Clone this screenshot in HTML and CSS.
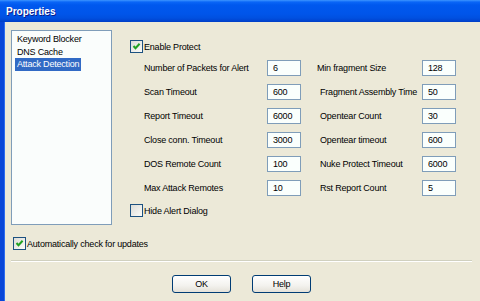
FILE: index.html
```html
<!DOCTYPE html>
<html lang="en">
<head>
    <meta charset="UTF-8">
    <meta name="viewport" content="width=device-width, initial-scale=1.0">
    <title>Properties</title>
    <link rel="stylesheet" href="styles.css">
</head>
<body>
    <div class="window">
        <div class="titlebar">Properties</div>

        <div class="frame">
            <div class="top">
                <ul class="nav">
                    <li><span>Keyword Blocker</span></li>
                    <li><span>DNS Cache</span></li>
                    <li class="selected"><span>Attack Detection</span></li>
                </ul>

                <div class="panel">
                    <label class="check">
                        <span class="box">
                            <svg width="11" height="11" viewBox="0 0 11 11"><path d="M2.5 5 L4.5 7.2 L8.6 2.8" fill="none" stroke="#21a121" stroke-width="2"/></svg>
                        </span>
                        Enable Protect
                    </label>

                    <div class="fields">
                        <span class="lbl">Number of Packets for Alert</span>
                        <input type="text" value="6">
                        <span class="lbl">Min fragment Size</span>
                        <input type="text" value="128">

                        <span class="lbl">Scan Timeout</span>
                        <input type="text" value="600">
                        <span class="lbl shift">Fragment Assembly Time</span>
                        <input type="text" value="50">

                        <span class="lbl">Report Timeout</span>
                        <input type="text" value="6000">
                        <span class="lbl shift">Opentear Count</span>
                        <input type="text" value="30">

                        <span class="lbl">Close conn. Timeout</span>
                        <input type="text" value="3000">
                        <span class="lbl shift">Opentear timeout</span>
                        <input type="text" value="600">

                        <span class="lbl">DOS Remote Count</span>
                        <input type="text" value="100">
                        <span class="lbl shift">Nuke Protect Timeout</span>
                        <input type="text" value="6000">

                        <span class="lbl">Max Attack Remotes</span>
                        <input type="text" value="10">
                        <span class="lbl shift">Rst Report Count</span>
                        <input type="text" value="5">
                    </div>

                    <label class="check hide">
                        <span class="box"></span>
                        Hide Alert Dialog
                    </label>
                </div>
            </div>

            <label class="check auto">
                <span class="box">
                    <svg width="11" height="11" viewBox="0 0 11 11"><path d="M2.5 5 L4.5 7.2 L8.6 2.8" fill="none" stroke="#21a121" stroke-width="2"/></svg>
                </span>
                Automatically check for updates
            </label>

            <div class="separator"></div>

            <div class="buttons">
                <button>OK</button>
                <button>Help</button>
            </div>
        </div>
    </div>
</body>
</html>
```

FILE: styles.css
```css
body {
    margin: 0;
    font-family: 'Liberation Sans', Arial, sans-serif;
    font-size: 9px;
    letter-spacing: -0.2px;
    color: #000;
    background: #ece9d8;
}

.window {
    width: 480px;
    height: 301px;
    overflow: hidden;
    background: #ece9d8;
}

.titlebar {
    height: 22px;
    line-height: 23px;
    padding-left: 6px;
    font-size: 10px;
    font-weight: bold;
    letter-spacing: 0;
    color: #fff;
    text-shadow: 1px 1px #0a1c8a;
    background: linear-gradient(#3d95ff 0px, #0a66f7 2px, #0058ee 5px, #0055ea 14px, #0050e0 18px, #0043cf 21px, #003dc4 22px);
}

.frame {
    height: 279px;
    border-left: 4px solid #0846d8;
    box-shadow: inset 1px 0 #2c6cf0;
    padding: 8px 8px 0 7px;
    box-sizing: border-box;
}

.top {
    display: flex;
    gap: 18px;
}

/* left list */
.nav {
    list-style: none;
    margin: 0;
    padding: 2px 0 0 3px;
    width: 101px;
    height: 195px;
    box-sizing: border-box;
    border: 1px solid #7f9db9;
    background: #fafdfc;
}

.nav li {
    height: 12.5px;
    line-height: 13px;
}

.nav span {
    padding: 0 2px;
    display: inline-block;
}

.nav .selected span {
    background: #316ac5;
    color: #fff;
}

/* right panel */
.panel {
    padding-top: 10px;
}

.check {
    display: flex;
    align-items: center;
    gap: 1px;
    height: 13px;
}

.box {
    width: 11px;
    height: 11px;
    border: 1px solid #1c5180;
    background: linear-gradient(135deg, #dcdcd7, #fbfbf8);
    display: flex;
}

.fields {
    display: grid;
    grid-template-columns: 123px 50px 105px 34px;
    grid-auto-rows: 16px;
    row-gap: 8px;
    align-items: center;
    margin: 7px 0 0 14px;
}

.lbl {
    white-space: nowrap;
}

.lbl.shift {
    padding-left: 3px;
}

input {
    width: 34px;
    height: 16px;
    box-sizing: border-box;
    border: 1px solid #7f9db9;
    background: #fafffd;
    padding: 0 0 0 5px;
    font-family: inherit;
    font-size: 9px;
    letter-spacing: -0.2px;
}

.hide {
    margin-top: 8px;
}

.auto {
    margin: 12px 0 0 2px;
}

.separator {
    margin-top: 10px;
    border-top: 1px solid #d0d0bf;
    border-bottom: 1px solid #fff;
}

.buttons {
    display: flex;
    justify-content: center;
    gap: 21px;
    margin-top: 13px;
}

button {
    width: 59px;
    height: 18px;
    border: 1px solid #003c74;
    border-radius: 3px;
    background: linear-gradient(#ffffff, #f3f2ee 60%, #e4e1d8);
    font-family: inherit;
    font-size: 9px;
    letter-spacing: -0.2px;
    padding: 0;
}
```
